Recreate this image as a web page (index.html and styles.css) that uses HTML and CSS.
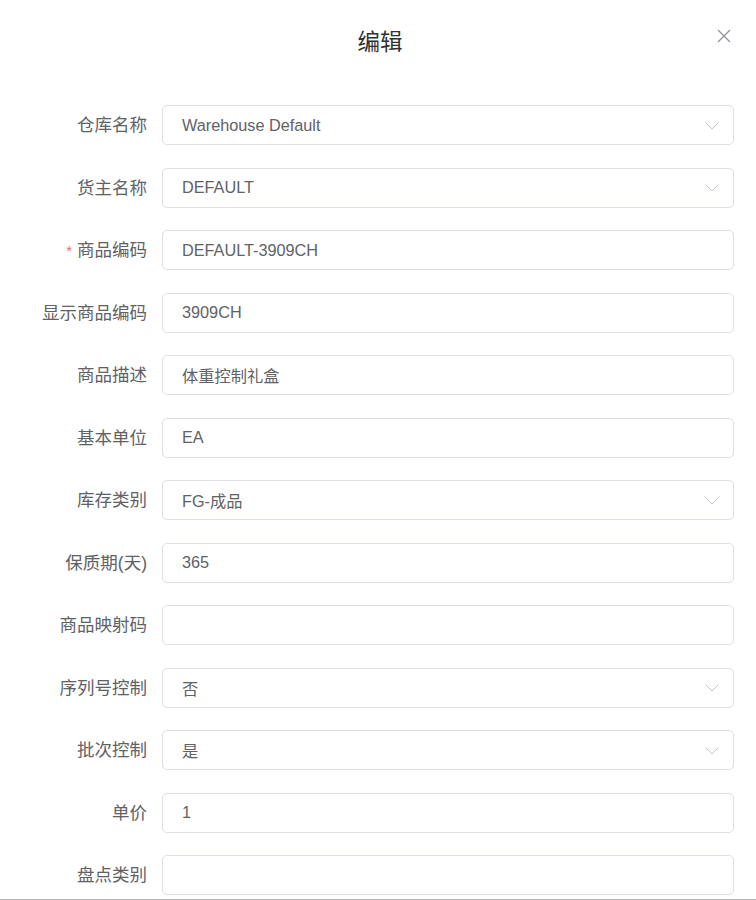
FILE: index.html
```html
<!DOCTYPE html>
<html lang="zh-CN">
<head>
<meta charset="utf-8">
<title>编辑</title>
<link rel="stylesheet" href="styles.css">
</head>
<body>
<div class="dialog">
  <div class="dialog-header">
    <span class="spacer"></span>
    <span class="dialog-title">编辑</span>
    <button class="dialog-close" aria-label="关闭">
      <svg width="14" height="14" viewBox="0 0 14 14"><path d="M1 1L13 13M13 1L1 13" stroke="#909399" stroke-width="1.3" fill="none"/></svg>
    </button>
  </div>
  <div class="dialog-body">
    <div class="form-item">
      <label class="form-label">仓库名称</label>
      <div class="input is-select"><span class="input-text">Warehouse Default</span><svg class="chevron" width="14" height="8" viewBox="0 0 14 8"><path d="M0.5 0.5L7 7L13.5 0.5" stroke="#C0C4CC" stroke-width="1" fill="none"/></svg></div>
    </div>
    <div class="form-item">
      <label class="form-label">货主名称</label>
      <div class="input is-select"><span class="input-text">DEFAULT</span><svg class="chevron" width="14" height="8" viewBox="0 0 14 8"><path d="M0.5 0.5L7 7L13.5 0.5" stroke="#C0C4CC" stroke-width="1" fill="none"/></svg></div>
    </div>
    <div class="form-item">
      <label class="form-label"><span class="required">*</span>商品编码</label>
      <div class="input"><span class="input-text">DEFAULT-3909CH</span></div>
    </div>
    <div class="form-item">
      <label class="form-label">显示商品编码</label>
      <div class="input"><span class="input-text">3909CH</span></div>
    </div>
    <div class="form-item">
      <label class="form-label">商品描述</label>
      <div class="input"><span class="input-text">体重控制礼盒</span></div>
    </div>
    <div class="form-item">
      <label class="form-label">基本单位</label>
      <div class="input"><span class="input-text">EA</span></div>
    </div>
    <div class="form-item">
      <label class="form-label">库存类别</label>
      <div class="input is-select"><span class="input-text">FG-成品</span><svg class="chevron" width="14" height="8" viewBox="0 0 14 8"><path d="M0.5 0.5L7 7L13.5 0.5" stroke="#C0C4CC" stroke-width="1" fill="none"/></svg></div>
    </div>
    <div class="form-item">
      <label class="form-label">保质期(天)</label>
      <div class="input"><span class="input-text">365</span></div>
    </div>
    <div class="form-item">
      <label class="form-label">商品映射码</label>
      <div class="input"><span class="input-text"></span></div>
    </div>
    <div class="form-item">
      <label class="form-label">序列号控制</label>
      <div class="input is-select"><span class="input-text">否</span><svg class="chevron" width="14" height="8" viewBox="0 0 14 8"><path d="M0.5 0.5L7 7L13.5 0.5" stroke="#C0C4CC" stroke-width="1" fill="none"/></svg></div>
    </div>
    <div class="form-item">
      <label class="form-label">批次控制</label>
      <div class="input is-select"><span class="input-text">是</span><svg class="chevron" width="14" height="8" viewBox="0 0 14 8"><path d="M0.5 0.5L7 7L13.5 0.5" stroke="#C0C4CC" stroke-width="1" fill="none"/></svg></div>
    </div>
    <div class="form-item">
      <label class="form-label">单价</label>
      <div class="input"><span class="input-text">1</span></div>
    </div>
    <div class="form-item">
      <label class="form-label">盘点类别</label>
      <div class="input"><span class="input-text"></span></div>
    </div>
  </div>
</div>
</body>
</html>
```
FILE: styles.css
```css
* { box-sizing: border-box; }
html, body {
  margin: 0;
  padding: 0;
  background: #fff;
}
body {
  width: 756px;
  height: 900px;
  overflow: hidden;
  font-family: "Liberation Sans", Arial, "Noto Sans CJK SC", sans-serif;
}
.dialog {
  height: 900px;
  border-bottom: 1px solid #b4b4b4;
  overflow: hidden;
  background: #fff;
}
.dialog-header {
  display: grid;
  grid-template-columns: 1fr auto 1fr;
  align-items: start;
  padding: 25px 25px 12.5px 29px;
  height: 67.5px;
}
.dialog-title {
  font-size: 22.5px;
  line-height: 30px;
  height: 30px;
  color: #303133;
  font-family: "Noto Sans CJK SC", sans-serif;
}
.dialog-close {
  justify-self: end;
  margin-top: 4px;
  width: 14px;
  height: 14px;
  padding: 0;
  border: 0;
  background: transparent;
  display: flex;
}
.dialog-body {
  padding: 37.5px 22px 0 25px;
}
.form-item {
  display: flex;
  height: 40px;
  margin-bottom: 22.5px;
}
.form-label {
  width: 137px;
  height: 40px;
  flex: none;
  text-align: right;
  padding-right: 15px;
  font-size: 17.5px;
  line-height: 40px;
  color: #606266;
  font-family: "Liberation Sans", "Noto Sans CJK SC", sans-serif;
  white-space: nowrap;
}
.required {
  color: #F56C6C;
  margin-right: 5px;
  font-size: 15px;
}
.input {
  flex: 1;
  height: 40px;
  border: 1px solid #DCDFE6;
  border-radius: 5px;
  padding: 0 14px 0 19px;
  display: flex;
  align-items: center;
  justify-content: space-between;
  color: #606266;
  font-size: 16.25px;
  font-family: "Liberation Sans", Arial, "Noto Sans CJK SC", sans-serif;
}
.input-text {
  white-space: nowrap;
}
.chevron {
  flex: none;
  margin-top: 1px;
}
```
